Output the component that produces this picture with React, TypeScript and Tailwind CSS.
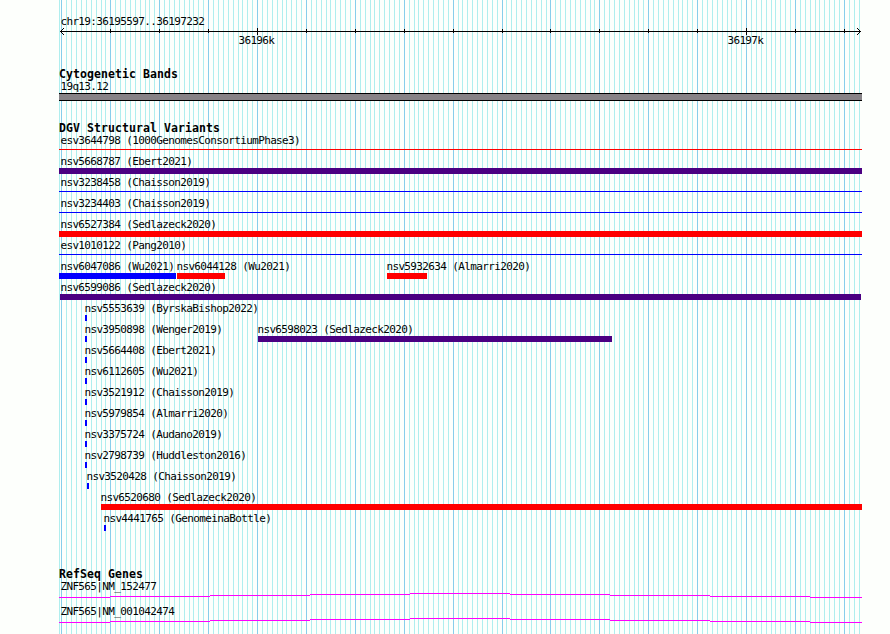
import React from "react";

type Bar = {
  name: string;
  x: number;
  width: number;
  color: string;
  thin?: boolean;
  labelX?: number;
};

const LEFT = 59;
const RED = "#ff0000";
const BLUE = "#0000ff";
const INDIGO = "#4b0082";

const rows: Bar[][] = [
  [{ name: "esv3644798 (1000GenomesConsortiumPhase3)", x: 59, width: 803, color: RED, thin: true }],
  [{ name: "nsv5668787 (Ebert2021)", x: 59, width: 803, color: INDIGO }],
  [{ name: "nsv3238458 (Chaisson2019)", x: 59, width: 803, color: BLUE, thin: true }],
  [{ name: "nsv3234403 (Chaisson2019)", x: 59, width: 803, color: BLUE, thin: true }],
  [{ name: "nsv6527384 (Sedlazeck2020)", x: 59, width: 803, color: RED }],
  [{ name: "esv1010122 (Pang2010)", x: 59, width: 803, color: BLUE, thin: true }],
  [
    { name: "nsv6047086 (Wu2021)", x: 59, width: 117, color: BLUE },
    { name: "nsv6044128 (Wu2021)", x: 177, width: 48, color: RED, labelX: 176.4 },
    { name: "nsv5932634 (Almarri2020)", x: 387, width: 40, color: RED, labelX: 386.4 },
  ],
  [{ name: "nsv6599086 (Sedlazeck2020)", x: 60, width: 801, color: INDIGO }],
  [{ name: "nsv5553639 (ByrskaBishop2022)", x: 85, width: 2, color: BLUE, labelX: 84.4 }],
  [
    { name: "nsv3950898 (Wenger2019)", x: 85, width: 2, color: BLUE, labelX: 84.4 },
    { name: "nsv6598023 (Sedlazeck2020)", x: 258, width: 354, color: INDIGO, labelX: 257.4 },
  ],
  [{ name: "nsv5664408 (Ebert2021)", x: 85, width: 2, color: BLUE, labelX: 84.4 }],
  [{ name: "nsv6112605 (Wu2021)", x: 85, width: 2, color: BLUE, labelX: 84.4 }],
  [{ name: "nsv3521912 (Chaisson2019)", x: 85, width: 2, color: BLUE, labelX: 84.4 }],
  [{ name: "nsv5979854 (Almarri2020)", x: 85, width: 2, color: BLUE, labelX: 84.4 }],
  [{ name: "nsv3375724 (Audano2019)", x: 85, width: 2, color: BLUE, labelX: 84.4 }],
  [{ name: "nsv2798739 (Huddleston2016)", x: 85, width: 2, color: BLUE, labelX: 84.4 }],
  [{ name: "nsv3520428 (Chaisson2019)", x: 87, width: 2, color: BLUE, labelX: 86.4 }],
  [{ name: "nsv6520680 (Sedlazeck2020)", x: 101, width: 761, color: RED, labelX: 100.4 }],
  [{ name: "nsv4441765 (GenomeinaBottle)", x: 104, width: 2, color: BLUE, labelX: 103.4 }],
];

// 36196k sits at 257.56, 10bp is 4.89px
const tickX = (n: number) => Math.floor(257.56 + n * 4.89);
const majorTicks = Array.from({ length: 17 }, (_, i) => tickX((i - 4) * 10));
const minorTicks = Array.from({ length: 164 }, (_, i) => tickX(i - 40));

const Grid: React.FC = () => (
  <svg
    className="absolute inset-0 -z-10"
    width="890"
    height="634"
    shapeRendering="crispEdges"
  >
    <rect x={59} y={0} width={1} height={634} fill="#afeeee" />
    {minorTicks.map((x) => (
      <rect key={x} x={x} y={0} width={1} height={634} fill="#afeeee" />
    ))}
    {majorTicks.map((x) => (
      <rect key={x} x={x} y={0} width={1} height={634} fill="#87ceeb" />
    ))}
  </svg>
);

const Ruler: React.FC = () => (
  <svg className="block" width="890" height="7" viewBox="0 1 890 7" shapeRendering="crispEdges">
    <rect x={60} y={4} width={801} height={1} />
    {majorTicks.slice(1).map((x) => {
      const big = x === 257 || x === 746;
      return <rect key={x} x={x} y={big ? 1 : 2} width={1} height={big ? 7 : 4} />;
    })}
    <path
      d="M61 3h1v1h-1zM62 2h1v1h-1zM63 1h1v1h-1zM61 5h1v1h-1zM62 6h1v1h-1zM63 7h1v1h-1z
         M859 3h1v1h-1zM858 2h1v1h-1zM857 1h1v1h-1zM859 5h1v1h-1zM858 6h1v1h-1zM857 7h1v1h-1z"
    />
  </svg>
);

const Label: React.FC<{ children: React.ReactNode }> = ({ children }) => (
  <div className="h-3 text-[11px] leading-3 tracking-[-0.63px] whitespace-nowrap">{children}</div>
);

const Heading: React.FC<{ children: React.ReactNode }> = ({ children }) => (
  <h2 className="h-[13px] pl-[59px] text-[11.5px] leading-3 font-bold tracking-[0.077px] whitespace-nowrap">
    {children}
  </h2>
);

const VariantRow: React.FC<{ bars: Bar[] }> = ({ bars }) => (
  <div className="grid h-[21px] grid-cols-1 grid-rows-1">
    {bars.map((bar) => (
      <div key={bar.name} className="col-start-1 row-start-1">
        <div style={{ paddingLeft: bar.labelX ?? LEFT + 1.4 }}>
          <Label>{bar.name}</Label>
        </div>
        <div
          className={bar.thin ? "mt-0.5 h-px" : "h-1.5"}
          style={{ marginLeft: bar.x, width: bar.width, backgroundColor: bar.color }}
        />
      </div>
    ))}
  </div>
);

const Gene: React.FC<{ name: string }> = ({ name }) => (
  <div className="h-[25px]">
    <div className="pl-[60.4px]">
      <Label>{name}</Label>
    </div>
    <svg
      className="block"
      width="890"
      height="5"
      viewBox="0 1 890 5"
      shapeRendering="crispEdges"
      fill="#ff00ff"
    >
      <rect x={59} y={5} width={51} height={1} />
      <rect x={110} y={4} width={100} height={1} />
      <rect x={210} y={3} width={100} height={1} />
      <rect x={310} y={2} width={100} height={1} />
      <rect x={410} y={1} width={100} height={1} />
      <rect x={510} y={2} width={100} height={1} />
      <rect x={610} y={3} width={100} height={1} />
      <rect x={710} y={4} width={100} height={1} />
      <rect x={810} y={5} width={52} height={1} />
    </svg>
  </div>
);

export default function App() {
  return (
    <main className="relative isolate flex h-[634px] w-[890px] flex-col overflow-hidden bg-[#fdfffc] font-['DejaVu_Sans_Mono',monospace] text-black">
      <Grid />

      {/* scale */}
      <header className="h-[68px] pt-4">
        <div className="pl-[60.4px]">
          <Label>chr19:36195597..36197232</Label>
        </div>
        <Ruler />
        <div className="flex gap-[459px] pl-[238.4px]">
          <div className="w-[30px]">
            <Label>36196k</Label>
          </div>
          <Label>36197k</Label>
        </div>
      </header>

      <section className="h-[54px]">
        <Heading>Cytogenetic Bands</Heading>
        <div className="pl-[60.4px]">
          <Label>19q13.12</Label>
        </div>
        <div className="ml-[59px] h-2 w-[803px] border-y border-black bg-[#878387]" />
      </section>

      <section className="h-[446px]">
        <Heading>DGV Structural Variants</Heading>
        {rows.map((bars) => (
          <VariantRow key={bars[0].name} bars={bars} />
        ))}
      </section>

      <section>
        <Heading>RefSeq Genes</Heading>
        <Gene name="ZNF565|NM_152477" />
        <Gene name="ZNF565|NM_001042474" />
      </section>
    </main>
  );
}
